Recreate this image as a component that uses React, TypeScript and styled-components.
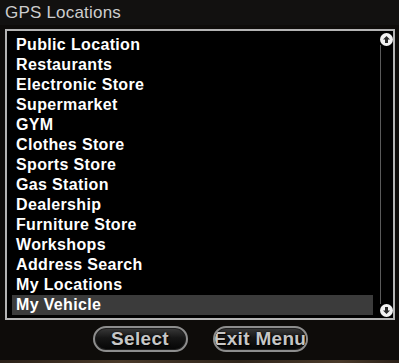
import styled, { createGlobalStyle } from "styled-components";

const GlobalStyle = createGlobalStyle`
  html, body {
    margin: 0;
    padding: 0;
    background: #0e0c0a;
  }
  body {
    font-family: "Liberation Sans", Arial, sans-serif;
  }
`;

const Frame = styled.div`
  width: 399px;
  height: 363px;
  display: flex;
  flex-direction: column;
  background: #0e0c0a;
  overflow: hidden;
  position: relative;
`;

const TopEdge = styled.div`
  height: 2px;
  background: linear-gradient(
    90deg,
    #2a2418 0%,
    #6b5a30 20%,
    #3a3020 35%,
    #7a6634 55%,
    #4a3e24 70%,
    #8a7440 85%,
    #3a3020 100%
  );
`;

const TitleBar = styled.div`
  height: 25px;
  display: flex;
  align-items: center;
  padding-left: 5px;
  background: #121110;
  color: #cdcdcd;
  font-size: 17px;
  letter-spacing: 0.2px;
  margin-top: -2px;
`;

const ListBox = styled.div`
  margin: 4px 4px 0 5px;
  height: 287px;
  border: 2px solid #b4b4b4;
  background: #000;
  display: flex;
  position: relative;
`;

const List = styled.ul`
  list-style: none;
  margin: 0;
  padding: 4px 0 0 5px;
  flex: 1;
`;

const Item = styled.li<{ $selected?: boolean }>`
  height: 20px;
  width: 361px;
  padding-left: 4px;
  box-sizing: border-box;
  display: flex;
  align-items: center;
  color: #fff;
  font-weight: bold;
  font-size: 16px;
  letter-spacing: 0.35px;
  background: ${(p) => (p.$selected ? "#3b3b3b" : "transparent")};
`;

const ScrollTrack = styled.div`
  width: 18px;
  display: flex;
  flex-direction: column;
  align-items: flex-end;
  justify-content: space-between;
  padding: 2px 0 1px;
  position: relative;
`;

const TrackLine = styled.div`
  position: absolute;
  top: 14px;
  bottom: 14px;
  left: 5px;
  width: 1px;
  background: #5a5a5a;
`;

const ScrollBtn = styled.div`
  width: 13px;
  height: 13px;
  border-radius: 50%;
  background: #f2f2f2;
  display: flex;
  align-items: center;
  justify-content: center;
  z-index: 1;
`;

const ButtonRow = styled.div`
  display: flex;
  justify-content: center;
  gap: 25px;
  margin-top: 6px;
  padding-left: 1px;
`;

const MenuButton = styled.button`
  width: 95px;
  height: 26px;
  border-radius: 13px;
  border: 2px solid #8d8d8d;
  background: linear-gradient(180deg, #3a3a3a 0%, #161616 45%, #050505 100%);
  box-shadow: inset 0 0 0 1px #1e1e1e;
  color: #c6c6c6;
  font-family: "Liberation Sans", Arial, sans-serif;
  font-weight: bold;
  font-size: 19px;
  letter-spacing: 0.3px;
  padding: 0;
  display: flex;
  align-items: center;
  justify-content: center;
  white-space: nowrap;
  overflow: hidden;
  text-shadow: 0 0 2px #000, 1px 1px 1px #000;
`;

const BottomEdge = styled.div`
  position: absolute;
  left: 0;
  right: 0;
  bottom: 0;
  height: 3px;
  background: linear-gradient(90deg, #2a2018, #4a3a2a 30%, #30261c 60%, #4a3a2a 85%, #2a2018);
`;

const items = [
  "Public Location",
  "Restaurants",
  "Electronic Store",
  "Supermarket",
  "GYM",
  "Clothes Store",
  "Sports Store",
  "Gas Station",
  "Dealership",
  "Furniture Store",
  "Workshops",
  "Address Search",
  "My Locations",
  "My Vehicle",
];

function Arrow({ up }: { up?: boolean }) {
  return (
    <svg width="9" height="9" viewBox="0 0 9 9">
      <path
        d={up ? "M4.5 1 L8 4.5 H6 V8 H3 V4.5 H1 Z" : "M4.5 8 L8 4.5 H6 V1 H3 V4.5 H1 Z"}
        fill="#2a2a2a"
      />
    </svg>
  );
}

export default function App() {
  return (
    <>
      <GlobalStyle />
      <Frame>
        <TopEdge />
        <TitleBar>GPS Locations</TitleBar>
        <ListBox>
          <List>
            {items.map((name, i) => (
              <Item key={name} $selected={i === items.length - 1}>
                {name}
              </Item>
            ))}
          </List>
          <ScrollTrack>
            <TrackLine />
            <ScrollBtn>
              <Arrow up />
            </ScrollBtn>
            <ScrollBtn>
              <Arrow />
            </ScrollBtn>
          </ScrollTrack>
        </ListBox>
        <ButtonRow>
          <MenuButton>Select</MenuButton>
          <MenuButton>Exit Menu</MenuButton>
        </ButtonRow>
        <BottomEdge />
      </Frame>
    </>
  );
}
